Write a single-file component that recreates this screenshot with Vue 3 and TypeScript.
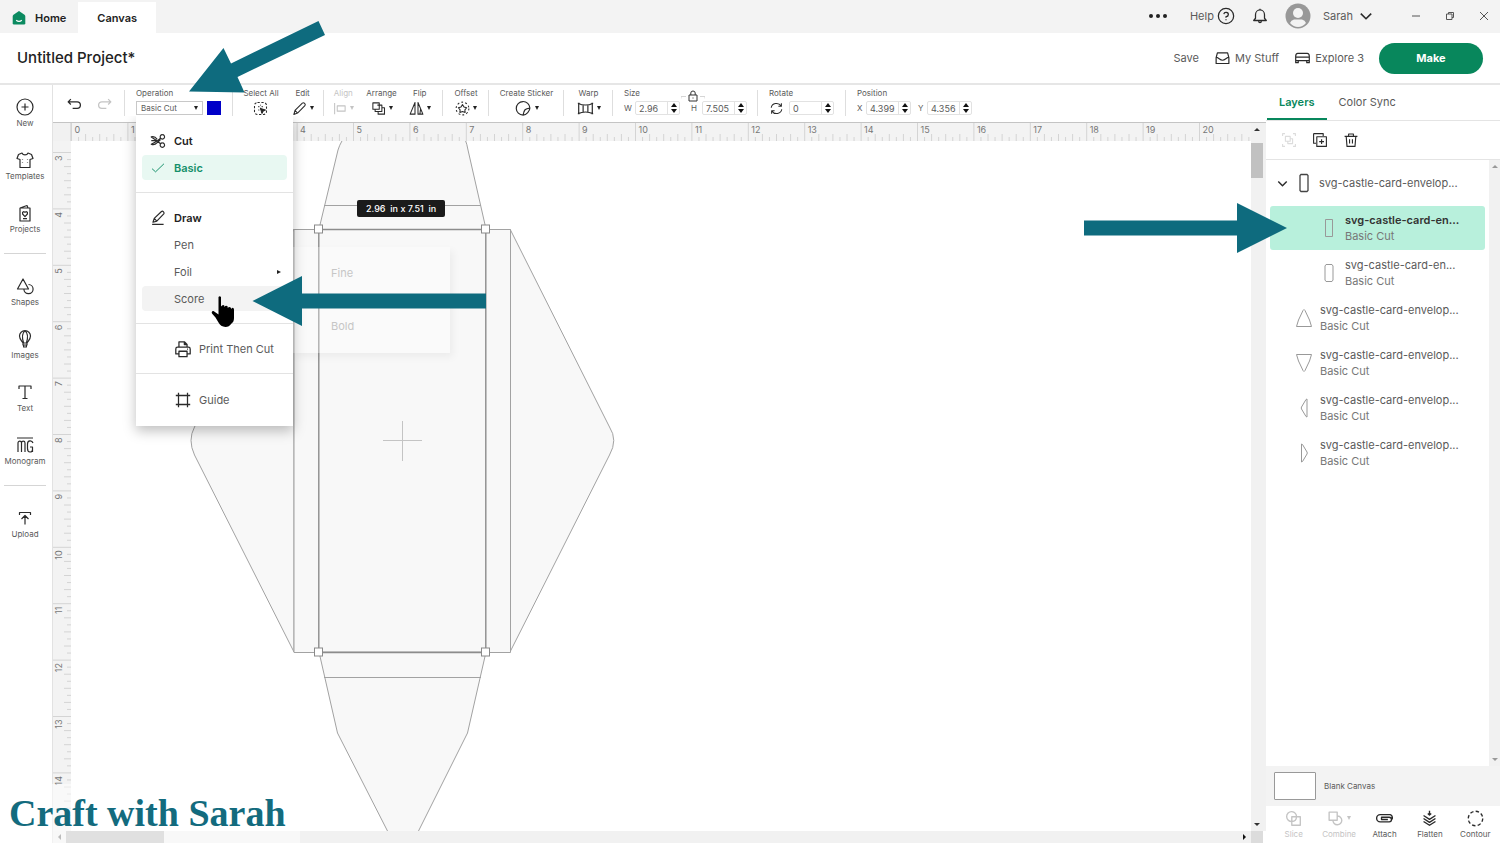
<script setup lang="ts">
import { h, ref } from 'vue'

const paths: Record<string, string> = {
  plus: 'M10 2a8 8 0 1 0 0 16a8 8 0 1 0 0-16M10 6.5v7M6.5 10h7',
  shirt: 'M7 3L3.5 4.5L2 8.5L5 9.5V17.5H15V9.5L18 8.5L16.5 4.5L13 3C12 5.5 8 5.5 7 3ZM7.5 9v.6M12.5 9v.6M7.5 12v.6M12.5 12v.6',
  card: 'M5 5h10v13H5ZM5 5L12 2.5L13 5M10 13.6L7.6 11V9.2L9 8.6L10 9.4L11 8.6L12.4 9.2V11ZM8 15.6h4',
  shapes: 'M8 3L2.5 13H13.5ZM13.5 8.5a4.6 4.6 0 1 1-4.6 4.8',
  balloon: 'M8 14C6.5 11.5 4.5 10 4.5 7A5.5 5.3 0 0 1 15.5 7C15.5 10 13.5 11.5 12 14ZM8.6 14C7 9 7.2 4 10 1.8C12.8 4 13 9 11.4 14M8 14v2h4v-2M8.6 16v2h2.8v-2',
  type: 'M4 7V4H16V7M10 4V16.5M7.5 16.5h5',
  monogram: 'M2 3H18M3 17V8C3 5.5 6.5 5.5 6.5 8V17M6.5 8C6.5 5.5 10 5.5 10 8V17M18 8C17 5 12.5 5 12.5 9V13.5C12.5 18 17.5 18 17.5 14.5V12H15M17.5 12V17',
  upload: 'M4.5 7V4.5H15.5V7M10 16.5V8M6.5 11L10 7.5L13.5 11',
  undo: 'M6.5 3.5L3.5 6.5L6.5 9.5M3.5 6.5H13.5a3.6 3.6 0 0 1 0 7.2H8.5',
  redo: 'M13.5 3.5L16.5 6.5L13.5 9.5M16.5 6.5H6.5a3.6 3.6 0 0 0 0 7.2H11.5',
  pencil: 'M2.5 18L4 12.6L13.8 2.8C15.8 1.4 18.8 4.400 17.2 6.300L7.4 16.1ZM4 12.6L7.4 16.1',
  align: 'M3.5 2.5V17.5M7 6.5H17.5V13.5H7Z',
  arrange: 'M2.5 2.5H11V11H2.5ZM8.5 5.5H14.5V14H5.5V11M14.5 9H18V17.5H9.5V14',
  flip: 'M8 2V17.5H1.5ZM12 2V17.5H18.5ZM15.500 10L14.5 17.5',
  sticker: 'M17.5 9.5A8 8 0 1 0 9.5 17.8C10.5 11.5 12 10 17.5 9.5C17.5 13 13.5 17.5 9.5 17.8',
  warp: 'M2 4C6 6.5 14 6.5 18 4V16C14 13.5 6 13.5 2 16ZM7.2 5.8V14.2M12.8 5.8V14.2M1 4h2M1 16h2M17 4h2M17 16h2',
  rotate: 'M3 9A7 6.5 0 0 1 16 6.5M16.5 3V7H12.5M17 11A7 6.5 0 0 1 4 13.5M3.5 17V13H7.5',
  help: 'M10 1.500a8.500 8.500 0 1 0 0 17a8.500 8.500 0 1 0 0-17M7.6 8A2.5 2.3 0 1 1 10 10.6V12M10 13.6V14.6',
  bell: 'M3 15H17L15 12.5V8.5A5 5.2 0 0 0 5 8.5V12.5ZM8.5 15.5C8.5 18 11.5 18 11.5 15.5M10 3.2V2',
  inbox: 'M2.5 9.5V16.5H17.5V9.5M2.5 9.5L4 4H16L17.5 9.5M2.5 8.5L7 11.5C8.5 13 11.5 13 13 11.5L17.5 8.5',
  machine: 'M4.5 4.5H15.5C17 4.5 18 6 18 8V15.5H15V13H5V15.5H2V8C2 6 3 4.5 4.5 4.5ZM2.2 9H17.8M5 13H2M18 13H15',
  group: 'M2 5V2H5M15 2H18V5M18 15V18H15M5 18H2V15M5.5 5.5H11.5V11.5H5.5ZM11.5 8.5H14.5V14.5H8.5V11.5',
  duplicate: 'M2 2H14V5M2 2V14H5M6 6H18V18H6ZM12 9V15M9 12H15',
  trash: 'M2 5.5H18M4 5.5L5 18H15L16 5.5M7 5.5V2.5H13V5.5M8.2 9V14.5M11.8 9V14.5',
  scissors: 'M14.5 2.5a2.6 2.6 0 1 0 .1 0M14.5 12.2a2.6 2.6 0 1 0 .1 0M12.4 6.6L8.5 10L1.5 13.8C4 15 7 13.5 8.5 12L12.4 8.2M12.4 13.2L8.5 10L1.5 5.2C4 4.2 7 6 8.5 8M1.5 9.5H7',
  check: 'M1.5 11L6.500 15.500L18.5 4',
  draw: 'M3.5 15L5 10.5L13.5 2.4C15 1.2 17.5 3.5 16.2 5.2L8 13.6ZM5 10.5L8 13.6M2.5 17.5H16',
  print: 'M5.5 8V2H11.5L14.5 5V8M11.5 2V5H14.5M5.5 15.5H2V10C2 8.8 2.8 8 4 8H16C17.2 8 18 8.8 18 10V15.5H14.5M5.5 12.5H14.5V18.5H5.5ZM14.5 10.2H15.5',
  frame: 'M5 2V18M15 2V18M2 5H18M2 15H18',
  slice: 'M13.5 8.5A5.8 5.8 0 1 0 8.5 13.5M8 8H18V18H8ZM8 13.5C11 13.5 13.5 12 13.5 8',
  combine: 'M2.5 2.5H12V12H2.5ZM12 7a5.2 5.2 0 1 1-5 5',
  attach: 'M17 5.500H5A4.200 4.200 0 0 0 5 14H15.5A2.7 2.7 0 0 0 15.5 8.500H6.5V11.200H14M17 5.500C19 6.500 19.500 9 19 11',
  flatten: 'M10 1V6M8 4L10 6L12 4M3 6.5L10 11L17 6.5M3 10L10 14.5L17 10M3 13.5L10 18L17 13.5',
  down: 'M3.5 7L10 13.5L16.5 7',
}

const Icon = (props: { name: string }) =>
  h('svg', { viewBox: '0 0 20 20', class: 'icon', 'aria-hidden': 'true' }, [h('path', { d: paths[props.name] })])
Icon.props = ['name']

const rail = [
  [['New', 'plus'], ['Templates', 'shirt'], ['Projects', 'card']],
  [['Shapes', 'shapes'], ['Images', 'balloon'], ['Text', 'type'], ['Monogram', 'monogram']],
  [['Upload', 'upload']],
]

const rows = [
  { name: 'svg-castle-card-en...', shape: 'M6.5 1.5H13.5V18.5H6.5Z', nested: true, selected: true },
  { name: 'svg-castle-card-en...', shape: 'M7 1.5H13L14 3V17L13 18.5H7L6 17V3Z', nested: true, selected: false },
  { name: 'svg-castle-card-envelop...', shape: 'M9 2.5Q10 .5 11 2.5L15.5 12L17.5 18.5H2.5L4.5 12Z', nested: false, selected: false },
  { name: 'svg-castle-card-envelop...', shape: 'M2.5 1.5H17.5L15.5 8L11 17.5Q10 19.5 9 17.5L4.5 8Z', nested: false, selected: false },
  { name: 'svg-castle-card-envelop...', shape: 'M13 1V19L12 18.5L7.5 11Q7 10 7.5 9L12 1.5Z', nested: false, selected: false },
  { name: 'svg-castle-card-envelop...', shape: 'M7.5 1V19L8.5 18.5L13 11Q13.5 10 13 9L8.5 1.5Z', nested: false, selected: false },
]

const actions = [
  { label: 'Slice', icon: 'slice', off: true },
  { label: 'Combine', icon: 'combine', off: true },
  { label: 'Attach', icon: 'attach', off: false },
  { label: 'Flatten', icon: 'flatten', off: false },
  { label: 'Contour', icon: 'contour', off: false },
]

const inch = 56.4
function ticks(start: number, first: number, last: number) {
  const out: { at: number; label: number | null; quarter: boolean }[] = []
  for (let i = 0; i < (last - first + 1) * 8; i++) {
    out.push({
      at: start + (i * inch) / 8,
      label: i % 8 === 0 ? first + i / 8 : null,
      quarter: i % 2 === 0,
    })
  }
  return out
}
const across = ticks(0.5, 0, 20)
const downward = ticks(11.5, 3, 14)

const operation = ref('Basic Cut')
const width = ref('2.96')
const height = ref('7.505')
const angle = ref('0')
const posX = ref('4.399')
const posY = ref('4.356')
const dims = '2.96  in x 7.51  in'
</script>

<template>
  <div class="app">
    <header class="titlebar">
      <button class="tab">
        <svg class="house" viewBox="0 0 14 14" aria-hidden="true">
          <path d="M7 0L12.5 3.8Q13.3 4.5 13.3 5.5V12.2Q13.3 13.5 12 13.5H2Q.7 13.5 .7 12.2V5.5Q.7 4.5 1.5 3.8Z" fill="#0b8a60" />
          <path d="M4.2 9.2Q7 11.6 9.8 9.2" fill="none" stroke="#fff" stroke-width="1.2" />
        </svg>
        Home
      </button>
      <button class="tab active">Canvas</button>
      <div class="account">
        <button class="plain dots" aria-label="More"><i></i><i></i><i></i></button>
        <button class="plain help">Help <Icon name="help" /></button>
        <button class="plain bell" aria-label="Notifications"><Icon name="bell" /></button>
        <svg class="avatar" viewBox="0 0 26 26" aria-hidden="true">
          <circle cx="13" cy="13" r="12.5" fill="#989898" />
          <circle cx="13" cy="10" r="5" fill="#f3f3f3" />
          <path d="M5 20Q6 17 9 16.5H17Q20 17 21 20Q17.5 24 13 24Q8.5 24 5 20Z" fill="#f3f3f3" />
        </svg>
        <button class="plain user">Sarah <Icon name="down" /></button>
        <button class="plain win" aria-label="Minimize"><svg viewBox="0 0 10 10"><path d="M1 5H9" /></svg></button>
        <button class="plain win" aria-label="Restore"><svg viewBox="0 0 10 10"><path d="M1.5 3H7V8.5H1.5ZM3.5 3V1.5H8.5V6.5H7" /></svg></button>
        <button class="plain win close" aria-label="Close"><svg viewBox="0 0 10 10"><path d="M1 1L9 9M9 1L1 9" /></svg></button>
      </div>
    </header>

    <div class="project">
      <h1>Untitled Project*</h1>
      <button class="plain">Save</button>
      <button class="plain"><Icon name="inbox" />My Stuff</button>
      <button class="plain"><Icon name="machine" />Explore 3</button>
      <button class="make">Make</button>
    </div>

    <div class="body">
      <nav class="rail">
        <div v-for="(section, i) in rail" :key="i" class="section">
          <button v-for="[label, icon] in section" :key="label"><Icon :name="icon" />{{ label }}</button>
        </div>
      </nav>

      <main class="editor">
        <div class="toolbar">
          <div class="set history">
            <button class="plain" aria-label="Undo"><Icon name="undo" /></button>
            <button class="plain off" aria-label="Redo"><Icon name="redo" /></button>
          </div>
          <div class="set operation">
            <label for="operation">Operation</label>
            <div class="line">
              <span class="pick">
                <select id="operation" v-model="operation">
                  <option>Basic Cut</option>
                </select>
                <i class="caret"></i>
              </span>
              <button class="swatch" aria-label="Colour"></button>
            </div>

            <div class="menu">
              <section>
                <h2><Icon name="scissors" />Cut</h2>
                <button class="chosen"><Icon name="check" />Basic</button>
              </section>
              <section>
                <h2><Icon name="draw" />Draw</h2>
                <button>Pen</button>
                <button>Foil<i class="more"></i></button>
                <button class="hover">Score</button>
              </section>
              <section>
                <button class="wide"><Icon name="print" />Print Then Cut</button>
              </section>
              <section>
                <button class="wide"><Icon name="frame" />Guide</button>
              </section>
            </div>
            <div class="submenu">
              <button>Fine</button>
              <button>Bold</button>
            </div>
          </div>
          <div class="set edit">
            <button class="tool">
              <span>Select All</span>
              <span class="line">
                <svg class="icon" viewBox="0 0 20 20">
                  <rect x="2" y="2" width="16" height="16" rx="4" stroke-dasharray="3 2.2" />
                  <path d="M7 7.5H8.5M11.5 7.5H13M7 12H8.5M10 5V6M10 9V11" />
                  <path d="M10 10L16.5 12L13.5 13.5L12 16.5Z" fill="#222" />
                </svg>
              </span>
            </button>
            <button class="tool"><span>Edit</span><span class="line"><Icon name="pencil" /><i class="caret"></i></span></button>
          </div>
          <div class="set arrange">
            <button class="tool off"><span>Align</span><span class="line"><Icon name="align" /><i class="caret"></i></span></button>
            <button class="tool"><span>Arrange</span><span class="line"><Icon name="arrange" /><i class="caret"></i></span></button>
            <button class="tool"><span>Flip</span><span class="line"><Icon name="flip" /><i class="caret"></i></span></button>
          </div>
          <div class="set offset">
            <button class="tool">
              <span>Offset</span>
              <span class="line">
                <svg class="icon" viewBox="0 0 20 20">
                  <path d="M10 4.8L12 8L15.5 9L13.2 11.8L13.5 15.2L10 14L6.5 15.2L6.8 11.8L4.5 9L8 8Z" />
                  <circle cx="10" cy="10" r="8.5" stroke-dasharray="2.5 2.84" />
                </svg><i class="caret"></i>
              </span>
            </button>
          </div>
          <div class="set sticker">
            <button class="tool"><span>Create Sticker</span><span class="line large"><Icon name="sticker" /><i class="caret"></i></span></button>
          </div>
          <div class="set warp">
            <button class="tool"><span>Warp</span><span class="line large"><Icon name="warp" /><i class="caret"></i></span></button>
          </div>
          <div class="set fields size">
            <span>Size</span>
            <div class="line">
              <label for="w">W</label><span class="num"><input id="w" v-model="width" /><i class="spin"></i></span>
              <label for="h" class="second">H</label><span class="num"><input id="h" v-model="height" /><i class="spin"></i></span>
            </div>
            <svg class="lock" viewBox="0 0 24 12" aria-hidden="true">
              <path d="M0 8.5V6.5H5M24 8.5V6.5H19" stroke="#d5d5d5" />
              <path d="M8 5H16V11H8ZM9.8 5V3Q9.8 1 12 1Q14.2 1 14.2 3V5M12 7.5V8.5" stroke="#333" />
            </svg>
          </div>
          <div class="set fields rotate">
            <label for="angle">Rotate</label>
            <div class="line"><Icon name="rotate" /><span class="num"><input id="angle" v-model="angle" /><i class="spin"></i></span></div>
          </div>
          <div class="set fields position">
            <span>Position</span>
            <div class="line">
              <label for="x">X</label><span class="num"><input id="x" v-model="posX" /><i class="spin"></i></span>
              <label for="y" class="second">Y</label><span class="num"><input id="y" v-model="posY" /><i class="spin"></i></span>
            </div>
          </div>
        </div>

        <div class="workspace">
          <div class="corner"></div>
          <svg class="ruler top">
            <g v-for="t in across" :key="t.at">
              <line :x1="t.at" :x2="t.at" :y1="t.label !== null ? 0 : t.quarter ? 11 : 14" y2="18" />
              <text v-if="t.label !== null" :x="t.at + 3" y="10">{{ t.label }}</text>
            </g>
          </svg>
          <svg class="ruler side">
            <g v-for="t in downward" :key="t.at">
              <line :y1="t.at" :y2="t.at" :x1="t.label !== null ? 0 : t.quarter ? 11 : 14" x2="18" />
              <text v-if="t.label !== null" text-anchor="end" :transform="`translate(9 ${t.at + 3}) rotate(-90)`">{{ t.label }}</text>
            </g>
          </svg>
          <div class="stage">
            <svg class="drawing">
              <g transform="translate(-71 -141)">
                <path d="M319 229L338 150Q339 146 343 139H465Q467 144 468 150L486 229" />
                <path d="M294 229L194.5 427Q187.5 440 194.5 455L294 652Z" />
                <path d="M510 229L609.5 427Q618 440 609.5 455L510 652Z" />
                <path d="M294 229.5H510.5V652.5H294Z" />
                <path d="M319 652L337.5 733L388 832H418L467.5 733L486 652Z" />
                <path d="M324 205.5H481M324 677.5H481" />
                <path class="frame" d="M318.8 229.5H485.8V652.5H318.8Z" />
                <path class="cross" d="M383 440.5H422M402.5 421V461" />
                <rect class="grip" x="314.5" y="225" width="8" height="8" />
                <rect class="grip" x="481.5" y="225" width="8" height="8" />
                <rect class="grip" x="314.5" y="648" width="8" height="8" />
                <rect class="grip" x="481.5" y="648" width="8" height="8" />
              </g>
            </svg>
            <div class="dims">{{ dims }}</div>
          </div>
          <div class="vscroll"><i class="tri up"></i><b></b><i class="tri dn"></i></div>
          <div class="hscroll"><i class="tri lf"></i><b></b><i class="tri rt"></i></div>
          <div class="nook"></div>
        </div>
      </main>

      <aside class="panel">
        <div class="tabs">
          <button class="on">Layers</button>
          <button>Color Sync</button>
        </div>
        <div class="tools">
          <button class="plain faint" aria-label="Group"><Icon name="group" /></button>
          <button class="plain" aria-label="Duplicate"><Icon name="duplicate" /></button>
          <button class="plain" aria-label="Delete"><Icon name="trash" /></button>
        </div>
        <div class="listing">
          <ul>
            <li class="parent">
              <Icon name="down" />
              <svg class="thumb dark" viewBox="0 0 20 20"><path d="M7 1.5H13L14 2.5V17.5L13 18.5H7L6 17.5V2.5Z" /></svg>
              <p>svg-castle-card-envelop...</p>
            </li>
            <li v-for="(row, i) in rows" :key="i" :class="{ nested: row.nested, selected: row.selected }">
              <svg class="thumb" viewBox="0 0 20 20"><path :d="row.shape" /></svg>
              <p><span>{{ row.name }}</span><small>Basic Cut</small></p>
            </li>
          </ul>
          <div class="slim"><i class="tri up"></i><i class="tri dn"></i></div>
        </div>
        <div class="blank"><i></i>Blank Canvas</div>
        <div class="actions">
          <button v-for="a in actions" :key="a.label" :class="{ off: a.off }">
            <span>
              <svg v-if="a.icon === 'contour'" class="icon" viewBox="0 0 20 20"><circle cx="10" cy="10" r="8.5" stroke-dasharray="4 2.67" /></svg>
              <Icon v-else :name="a.icon" />
              <i v-if="a.icon === 'combine'" class="caret"></i>
            </span>
            {{ a.label }}
          </button>
        </div>
      </aside>
    </div>

    <div class="brand">Craft with Sarah</div>
    <svg class="pointer left" viewBox="0 0 340 340" aria-hidden="true">
      <path d="M189 91.5L223.5 48L231 63.5L318.5 21L325 35L237.5 77L244.5 92.5Z" />
      <path d="M252.5 301L302 276V293.5H486V308.5H302V326Z" />
    </svg>
    <svg class="pointer right" viewBox="0 0 204 50" aria-hidden="true"><path d="M0 17.5H153V0L203 25L153 50V32.5H0Z" /></svg>
    <svg class="hand" viewBox="0 0 24 32" aria-hidden="true">
      <path d="M7.500 1Q8.700-.5 10 1V10.500Q11.800 8 13.300 9.500V11Q15 9 16.700 10.500V12Q18.500 10 20 12V13Q22.500 10.500 23 13.500V22Q23 26 20.500 27.500Q18 31 14.500 31Q9.500 30.500 7.500 26.500L4.500 21.500L1 17.500Q0 15 2.500 15L7.500 18.500Z" />
    </svg>
  </div>
</template>

<style>
body {
  background: #fff;
}
</style>

<style scoped>
.app {
  position: relative;
  display: flex;
  flex-direction: column;
  height: 100vh;
  overflow: hidden;
  background: #fff;
  color: #5a5a5a;
  font: 11px/14px Inter, "Liberation Sans", sans-serif;
}
* {
  box-sizing: border-box;
}
button, input, select {
  margin: 0;
  padding: 0;
  border: 0;
  background: none;
  color: inherit;
  font: inherit;
}
h1, h2, p, ul {
  margin: 0;
  padding: 0;
  list-style: none;
}
.icon {
  flex: none;
  width: 18px;
  height: 18px;
  fill: none;
  stroke: #2a2a2a;
  stroke-width: 1.4;
  stroke-linejoin: round;
}
.plain {
  display: flex;
  align-items: center;
}
.off {
  color: #c4c4c4;
}
.off .icon {
  stroke: #c4c4c4;
}
.caret {
  flex: none;
  border: 2px solid transparent;
  border-top: 4px solid #222;
  border-bottom: 0;
}
.off .caret {
  border-top-color: #c4c4c4;
}

.titlebar {
  display: flex;
  flex: none;
  height: 33px;
  background: #f3f3f3;
}
.tab {
  display: flex;
  align-items: center;
  gap: 9px;
  padding: 2px 12px 0;
  color: #222;
  font-weight: 600;
}
.tab.active {
  margin-top: 2px;
  padding: 0 19px;
  background: #fff;
}
.house {
  width: 14px;
  height: 14px;
}
.account {
  display: flex;
  align-items: center;
  margin-left: auto;
  padding: 0 11px 1px 0;
}
.dots {
  gap: 3px;
  margin-right: 23px;
}
.dots i {
  width: 4px;
  height: 4px;
  border-radius: 50%;
  background: #222;
}
.help {
  gap: 3px;
  margin-right: 16px;
}
.bell {
  margin-right: 16px;
}
.avatar {
  width: 26px;
  height: 26px;
  margin-right: 12px;
}
.user {
  gap: 5px;
  margin-right: 37px;
}
.user .icon {
  width: 16px;
  stroke-width: 2;
}
.win {
  margin-right: 24px;
}
.win.close {
  margin-right: 0;
}
.win svg {
  width: 10px;
  height: 10px;
  fill: none;
  stroke: #555;
}

.project {
  display: flex;
  flex: none;
  align-items: center;
  gap: 15px;
  height: 52px;
  padding: 0 17px;
  border-bottom: 2px solid #e6e6e6;
}
.project h1 {
  margin-right: auto;
  color: #222;
  font-size: 15px;
  font-weight: 500;
  line-height: 20px;
}
.project .plain {
  gap: 4px;
}
.project .icon {
  width: 17px;
}
.make {
  width: 104px;
  height: 31px;
  border-radius: 16px;
  background: #08875c;
  color: #fff;
  font-weight: 700;
}

.body {
  display: grid;
  flex: 1;
  grid-template-columns: 53px minmax(0, 1fr) 234px;
  min-height: 0;
}
.rail {
  border-right: 1px solid #e2e2e2;
}
.section {
  display: flex;
  flex-direction: column;
}
.section + .section::before {
  width: 42px;
  height: 1px;
  margin: 9px 4px 10px;
  background: #d5d5d5;
  content: "";
}
.rail button {
  display: flex;
  flex-direction: column;
  align-items: center;
  height: 53px;
  padding: 12px 2px 0 0;
  font-size: 8px;
  line-height: 12px;
}
.rail .icon {
  width: 20px;
  height: 20px;
  stroke-width: 1.2;
}

.editor {
  display: flex;
  flex-direction: column;
  min-width: 0;
}
.toolbar {
  display: flex;
  flex: none;
  height: 37px;
  font-size: 8px;
  line-height: 11px;
}
.set {
  position: relative;
  display: flex;
  flex: none;
  justify-content: center;
  padding-top: 3px;
}
.set:not(:last-child)::after {
  position: absolute;
  top: 5px;
  right: 0;
  width: 1px;
  height: 26px;
  background: #dedede;
  content: "";
}
.line {
  display: flex;
  align-items: center;
  gap: 3px;
  height: 16px;
  margin-top: 1px;
}
.line .icon {
  width: 15px;
  height: 15px;
}
.line.large .icon {
  width: 17px;
  height: 17px;
}
.tool {
  display: flex;
  flex-direction: column;
  align-items: center;
}
.history {
  gap: 13px;
  width: 72px;
}
.operation {
  flex-direction: column;
  justify-content: flex-start;
  width: 108px;
  padding-left: 11px;
}
.edit {
  gap: 13px;
  width: 91px;
}
.arrange {
  gap: 12px;
  width: 119px;
  padding-right: 4px;
}
.offset {
  width: 46px;
}
.sticker {
  width: 75px;
}
.warp {
  width: 49px;
}
.fields {
  flex-direction: column;
  justify-content: flex-start;
  padding-left: 11px;
}
.size {
  width: 145px;
}
.rotate {
  width: 88px;
}
.position {
  width: 140px;
}
.size .line label {
  width: 8px;
}
.position .line label {
  width: 6px;
}
.line .second {
  margin-left: 8px;
}
.position .line .second {
  margin-left: 4px;
}
.rotate .icon {
  margin-right: 2px;
}
.pick {
  position: relative;
  display: flex;
  align-items: center;
}
.pick select {
  width: 67px;
  height: 14px;
  padding-left: 4px;
  border: 1px solid #c8c8c8;
  appearance: none;
}
.pick .caret {
  position: absolute;
  right: 5px;
}
.swatch {
  width: 14px;
  height: 14px;
  margin-left: 1px;
  background: #0000c8;
}
.num {
  display: flex;
  width: 45px;
  height: 14px;
  border: 1px solid #e2e2e2;
  border-radius: 2px;
}
.num input {
  flex: 1;
  width: 0;
  padding-left: 3px;
  font-size: 9px;
}
.spin {
  display: flex;
  flex-direction: column;
  align-items: center;
  justify-content: center;
  gap: 2px;
  width: 12px;
  border-left: 1px solid #e2e2e2;
}
.spin::before, .spin::after {
  border: 3px solid transparent;
  content: "";
}
.spin::before {
  border-top: 0;
  border-bottom: 4px solid #111;
}
.spin::after {
  border-top: 4px solid #111;
  border-bottom: 0;
}
.lock {
  position: absolute;
  top: 5px;
  left: 68px;
  width: 24px;
  height: 12px;
  fill: none;
}

.menu {
  position: absolute;
  z-index: 3;
  top: 31px;
  left: 11px;
  width: 157px;
  padding-top: 12px;
  background: #fff;
  box-shadow: 0 5px 12px rgba(0, 0, 0, 0.25);
  clip-path: inset(0 -24px -24px -24px);
  font-size: 11px;
  line-height: 14px;
}
.menu section {
  display: flex;
  flex-direction: column;
  gap: 2px;
  padding: 12px 6px;
}
.menu section:first-child {
  padding-top: 0;
}
.menu section:last-child {
  padding: 13px 6px 14px;
}
.menu section + section {
  border-top: 1px solid #e3e3e3;
}
.menu h2, .menu button {
  display: flex;
  align-items: center;
  height: 25px;
  padding: 0 6px 0 32px;
  border-radius: 4px;
  font-size: 11px;
  font-weight: 400;
}
.menu h2 {
  padding-left: 8px;
  color: #222;
  font-weight: 600;
}
.menu h2 .icon {
  width: 17px;
  margin-right: 7px;
}
.menu .chosen {
  padding-left: 9px;
  background: #e8f8f2;
  color: #15906a;
  font-weight: 600;
}
.chosen .icon {
  width: 14px;
  height: 14px;
  margin-right: 9px;
  stroke: #15906a;
}
.menu .hover {
  background: #f3f3f3;
}
.menu .more {
  margin-left: auto;
  border: 2px solid transparent;
  border-right: 0;
  border-left: 4px solid #222;
}
.wide .icon {
  width: 18px;
  margin-right: 7px;
}
.submenu {
  position: absolute;
  z-index: 2;
  top: 162px;
  left: 168px;
  display: flex;
  flex-direction: column;
  gap: 29px;
  width: 157px;
  height: 106px;
  padding: 14px 38px;
  background: rgba(255, 255, 255, 0.3);
  box-shadow: 3px 4px 8px rgba(0, 0, 0, 0.05);
  color: #c6c6c6;
}
.submenu button {
  height: 24px;
  font-size: 11px;
  text-align: left;
}

.workspace {
  display: grid;
  flex: 1;
  grid-template: 18px minmax(0, 1fr) 12px / 18px minmax(0, 1fr) 15px;
  min-height: 0;
  border-top: 1px solid #c4c4c4;
}
.corner {
  border-right: 1px solid #ddd;
  background: #f1f1f1;
}
.ruler {
  width: 100%;
  height: 100%;
  overflow: hidden;
  background: #f3f3f3;
}
.ruler line {
  stroke: #d4d4d4;
}
.ruler text {
  fill: #777;
  font-size: 9px;
}
.vscroll {
  position: relative;
  grid-area: 1 / 3 / 3 / 4;
  padding-top: 20px;
  background: #f1f1f1;
}
.vscroll b {
  display: block;
  width: 12px;
  height: 35px;
  background: #c1c1c1;
}
.side {
  grid-area: 2 / 1;
}
.stage {
  position: relative;
  grid-area: 2 / 2;
  overflow: hidden;
}
.drawing {
  display: block;
  width: 100%;
  height: 100%;
}
.drawing path {
  fill: #f8f8f8;
  stroke: #a2a2a2;
}
.drawing .frame {
  fill: none;
  stroke: #8c8c8c;
  stroke-width: 1.4;
}
.drawing .cross {
  stroke: #c4c4c4;
}
.grip {
  fill: #fff;
  stroke: #8a8a8a;
}
.dims {
  position: absolute;
  top: 59px;
  left: 286px;
  padding: 0 9px;
  border-radius: 2px;
  background: #1b1b1b;
  color: #fff;
  font-size: 9px;
  font-weight: 500;
  line-height: 17px;
  white-space: pre;
}
.hscroll {
  position: relative;
  grid-area: 3 / 1 / 4 / 3;
  padding-left: 13px;
  background: #f1f1f1;
}
.hscroll b {
  display: block;
  width: 98px;
  height: 12px;
  background: #c1c1c1;
}
.nook {
  grid-area: 3 / 3;
  width: 12px;
  background: #dcdcdc;
}
.tri {
  position: absolute;
  border: 3px solid transparent;
}
.tri.up {
  top: 5px;
  left: 3px;
  border-top: 0;
  border-bottom-color: #333;
}
.tri.dn {
  bottom: 5px;
  left: 3px;
  border-top-color: #333;
  border-bottom: 0;
}
.tri.lf {
  top: 3px;
  left: 5px;
  border-right-color: #777;
  border-left: 0;
}
.tri.rt {
  top: 3px;
  right: 5px;
  border-right: 0;
  border-left-color: #111;
}

.panel {
  display: flex;
  flex-direction: column;
  min-height: 0;
}
.tabs {
  display: flex;
  flex: none;
  height: 36px;
  padding-left: 1px;
  border-bottom: 1px solid #e4e4e4;
}
.tabs button {
  padding: 0 12px;
  border-bottom: 2px solid transparent;
}
.tabs .on {
  border-color: #08875c;
  color: #08875c;
  font-weight: 600;
}
.tools {
  display: flex;
  flex: none;
  gap: 15px;
  height: 39px;
  padding: 0 15px;
  border-bottom: 1px solid #e4e4e4;
}
.tools .icon {
  width: 16px;
  height: 16px;
}
.faint .icon {
  stroke: #dcdcdc;
}
.listing {
  display: flex;
  flex: 1;
  min-height: 0;
}
.listing ul {
  display: flex;
  flex: 1;
  flex-direction: column;
  gap: 1px;
  padding: 1px 4px 0;
}
.slim {
  position: relative;
  width: 11px;
  background: #f1f1f1;
}
.slim .up {
  border-bottom-color: #999;
}
.slim .dn {
  border-top-color: #999;
}
.listing li {
  display: flex;
  flex: none;
  align-items: center;
  gap: 6px;
  height: 44px;
  padding-left: 24px;
  border-radius: 3px;
}
.listing .parent {
  gap: 5px;
  padding-left: 6px;
}
.parent .icon {
  width: 13px;
  height: 13px;
  stroke-width: 2.2;
}
.listing .nested {
  padding-left: 49px;
}
.listing .selected {
  background: #b8f0dc;
}
.selected span {
  color: #333;
  font-weight: 600;
}
.listing p, .listing small {
  display: block;
  font-size: 11px;
  line-height: 16px;
}
.listing small {
  color: #777;
}
.thumb {
  flex: none;
  width: 20px;
  height: 20px;
  fill: none;
  stroke: #999;
  stroke-width: 1;
}
.thumb.dark {
  stroke: #444;
  stroke-width: 1.3;
}
.blank {
  display: flex;
  flex: none;
  align-items: center;
  gap: 8px;
  height: 40px;
  padding-left: 8px;
  background: #f3f3f3;
  font-size: 8px;
}
.blank i {
  width: 42px;
  height: 28px;
  border: 1px solid #999;
  border-radius: 1px;
  background: #fff;
}
.actions {
  display: grid;
  flex: none;
  grid-template-columns: repeat(5, 1fr);
  height: 37px;
  padding: 2px 2px 0 5px;
}
.actions button {
  padding-bottom: 3px;
  font-size: 8px;
  line-height: 12px;
}
.actions span {
  display: flex;
  align-items: center;
  justify-content: center;
  gap: 3px;
  height: 20px;
}
.actions .icon {
  width: 17px;
  height: 17px;
  stroke-width: 1.6;
}

.brand {
  position: absolute;
  z-index: 4;
  bottom: 0;
  left: 0;
  width: 300px;
  height: 59px;
  padding-left: 9px;
  background: rgba(255, 255, 255, 0.5);
  color: #136b7e;
  font: bold 38px/58px "Liberation Serif", serif;
  white-space: nowrap;
}
.pointer {
  position: absolute;
  z-index: 5;
  overflow: visible;
  fill: #0e6b7e;
  pointer-events: none;
}
.pointer.left {
  top: 0;
  left: 0;
  width: 340px;
  height: 340px;
}
.pointer.right {
  top: 203px;
  right: 212px;
  width: 204px;
  height: 50px;
}
.hand {
  position: absolute;
  z-index: 6;
  top: 296px;
  left: 211px;
  width: 24px;
  height: 32px;
}
</style>
